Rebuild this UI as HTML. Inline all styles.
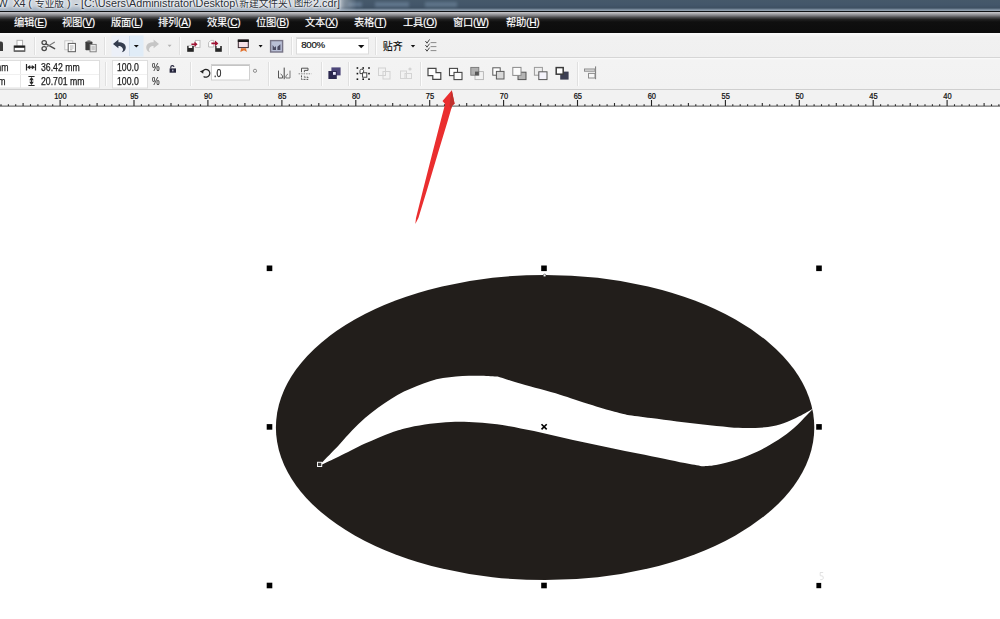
<!DOCTYPE html>
<html lang="zh-CN">
<head>
<meta charset="utf-8">
<title>CorelDRAW X4</title>
<style>
html,body{margin:0;padding:0;}
body{width:1000px;height:619px;overflow:hidden;background:#fff;position:relative;
  font-family:"Liberation Sans","Noto Sans CJK SC",sans-serif;}
.abs{position:absolute;}
#title{left:0;top:0;width:1000px;height:11px;overflow:hidden;
  background:linear-gradient(#46596a 0px,#43566a 5px,#3e5062 8px,#66788a 9px,#8d9cab 10.2px,#8d9cab 11px);}
#titleglow{left:0;top:0;width:360px;height:11px;
  background:linear-gradient(#ccd3db 0px,#c6ced7 6px,#b0bcc9 8px,#a4b1c0 11px);
  -webkit-mask-image:linear-gradient(90deg,#000 0px,#000 334px,rgba(0,0,0,.45) 345px,transparent 357px);
  mask-image:linear-gradient(90deg,#000 0px,#000 334px,rgba(0,0,0,.45) 345px,transparent 357px);}
#titletext{left:0;top:-3.3px;font-size:10.8px;line-height:13px;color:#2b3038;white-space:nowrap;
  text-shadow:0 0 2px #fff,0 0 3px #fff,0 0 5px #fff;}
#titletext span{position:absolute;top:0;white-space:nowrap}
#titletext .cj{font-size:9.7px;top:.6px}
#menu{left:0;top:11px;width:1000px;height:22px;
  background:linear-gradient(#101214 0px,#101214 1px,#c6c6cb 1px,#adadb1 2.5px,#7e7e82 4.5px,#474749 6.5px,#202020 8.5px,#0f0f0f 11px,#0c0c0c 22px);}
.mi{position:absolute;top:5.8px;font-size:10.3px;line-height:12px;color:#fff;white-space:nowrap;letter-spacing:-0.3px;text-shadow:0 0 1px rgba(255,255,255,.55)}
.mi u{text-decoration:underline;text-underline-offset:1px}
#tb1{left:0;top:33px;width:1000px;height:24px;background:linear-gradient(#fbfbfb 0px,#f6f6f6 2px,#f1f1f1 4px,#f0f0f0 24px);}
#tb2{left:0;top:57px;width:1000px;height:32px;background:linear-gradient(#d6d6d6 0px,#d6d6d6 1px,#fbfbfb 1px,#f3f3f3 3px,#f2f2f2 32px);}
#ruler{left:0;top:89px;width:1000px;height:17.5px;background:#f2f2f2;border-top:1px solid #cfcfcf;box-sizing:border-box}
.sep{position:absolute;width:1px;background:#dcdcdc}
.inp{position:absolute;background:#fff;border:1px solid #d9d9d9;box-sizing:border-box}
.t9{position:absolute;font-size:9px;line-height:10px;color:#1c1c1c;white-space:nowrap}
.nx{font-size:10px;line-height:11px;transform:scaleX(.87);transform-origin:0 0;-webkit-text-stroke:.25px #1c1c1c}
.pc{font-size:11px;line-height:12px;color:#333;transform:scaleX(.78);transform-origin:0 0;-webkit-text-stroke:.2px #333}
</style>
</head>
<body>
<div id="title" class="abs">
  <div class="abs" style="left:348px;top:2px;width:14px;height:5px;background:rgba(150,175,200,.35);filter:blur(1.5px)"></div>
  <div class="abs" style="left:375px;top:2px;width:34px;height:5px;background:rgba(150,175,200,.35);filter:blur(1.5px)"></div>
  <div class="abs" style="left:425px;top:2px;width:32px;height:5px;background:rgba(150,175,200,.33);filter:blur(1.5px)"></div>
  <div id="titleglow" class="abs"></div>
  <div id="titletext" class="abs"><span style="left:-2.6px">W</span><span style="left:13px;letter-spacing:-0.7px">X4</span><span style="left:28.3px">(</span><span class="cj" style="left:35px">专业版</span><span style="left:67px">)</span><span style="left:74.5px">-</span><span style="left:81px">[C:\Users\Administrator\Desktop\</span><span class="cj" style="left:239.3px">新建文件夹</span><span style="left:288.3px">\</span><span class="cj" style="left:294px;font-size:9.3px">图形</span><span style="left:313px">2.cdr]</span></div>
</div>
<div id="menu" class="abs">
  <span class="mi" style="left:14px">编辑(<u>E</u>)</span>
  <span class="mi" style="left:62px">视图(<u>V</u>)</span>
  <span class="mi" style="left:111px">版面(<u>L</u>)</span>
  <span class="mi" style="left:158px">排列(<u>A</u>)</span>
  <span class="mi" style="left:207px">效果(<u>C</u>)</span>
  <span class="mi" style="left:256px">位图(<u>B</u>)</span>
  <span class="mi" style="left:305px">文本(<u>X</u>)</span>
  <span class="mi" style="left:354px">表格(<u>T</u>)</span>
  <span class="mi" style="left:403px">工具(<u>O</u>)</span>
  <span class="mi" style="left:453px">窗口(<u>W</u>)</span>
  <span class="mi" style="left:506px">帮助(<u>H</u>)</span>
</div>
<div id="tb1" class="abs"></div>
<div id="tb2" class="abs"></div>
<div id="ruler" class="abs"></div>
<svg class="abs" style="left:0;top:0" width="1000" height="619" viewBox="0 0 1000 619">
  <!-- coffee bean -->
  <ellipse cx="545.1" cy="427.5" rx="269.2" ry="152.6" fill="#221e1b"/>
  <path id="swoosh" fill="#fff" d="M322.0,462.4 C324.8,459.5 334.0,450.2 339.0,444.9 C344.0,439.6 347.7,435.1 352.0,430.6 C356.3,426.1 360.7,421.9 365.0,418.1 C369.3,414.3 373.7,410.9 378.0,407.7 C382.3,404.5 386.7,401.6 391.0,398.9 C395.3,396.2 399.7,393.8 404.0,391.6 C408.3,389.4 412.7,387.6 417.0,385.9 C421.3,384.2 425.7,382.5 430.0,381.2 C434.3,379.9 438.7,378.9 443.0,378.1 C447.3,377.3 451.7,376.9 456.0,376.5 C460.3,376.1 464.7,375.8 469.0,375.7 C473.3,375.6 477.2,375.6 482.0,375.7 C486.8,375.8 495.0,376.4 497.6,376.5 C501.5,377.7 510.6,380.8 521.0,383.8 C531.4,386.8 549.2,391.4 560.0,394.7 C570.8,397.9 577.3,400.6 586.0,403.3 C594.7,406.0 605.1,409.2 612.0,411.1 C618.9,413.1 625.0,414.4 627.6,415.0 C631.5,415.5 642.8,417.0 651.0,418.1 C659.2,419.2 668.3,420.4 677.0,421.5 C685.7,422.6 694.3,423.7 703.0,424.6 C711.7,425.6 721.6,426.6 729.0,427.2 C736.4,427.8 740.7,428.0 747.2,428.0 C753.7,428.0 761.9,427.8 768.0,427.0 C774.1,426.2 778.4,425.1 783.6,423.3 C788.8,421.5 794.3,418.8 799.2,416.3 C804.1,413.8 810.9,409.7 813.2,408.4 C812.2,409.5 810.2,411.7 807.0,415.0 C803.8,418.3 798.8,423.9 794.0,428.0 C789.2,432.1 784.5,435.8 778.4,439.7 C772.3,443.6 764.5,448.1 757.6,451.4 C750.7,454.7 743.7,457.4 736.8,459.7 C729.9,461.9 721.9,463.8 716.0,464.9 C710.1,466.0 704.1,466.0 701.7,466.2 C698.9,465.7 691.1,464.4 684.8,463.1 C678.5,461.9 671.8,460.3 664.0,458.7 C656.2,457.1 646.7,455.2 638.0,453.5 C629.3,451.8 620.7,450.1 612.0,448.3 C603.3,446.5 594.7,444.7 586.0,442.8 C577.3,440.9 568.7,439.1 560.0,437.1 C551.3,435.2 542.7,433.0 534.0,431.1 C525.3,429.2 515.8,427.2 508.0,425.9 C500.2,424.6 493.7,423.9 487.2,423.3 C480.7,422.7 475.1,422.2 469.0,422.0 C462.9,421.8 457.3,421.7 450.8,422.0 C444.3,422.3 436.9,422.9 430.0,423.8 C423.1,424.7 415.7,426.0 409.2,427.5 C402.7,429.0 398.4,430.0 391.0,432.7 C383.6,435.4 373.7,439.6 365.0,443.6 C356.3,447.6 346.2,453.1 339.0,456.6 C331.8,460.1 324.8,463.3 322.0,464.6 Z"/>
  <!-- selection handles -->
  <g fill="#000">
    <rect x="266.7" y="265.5" width="5.6" height="5.6"/><rect x="541.2" y="265.5" width="5.6" height="5.6"/><rect x="816.2" y="265.5" width="5.6" height="5.6"/><rect x="266.7" y="424.1" width="5.6" height="5.6"/><rect x="816.2" y="424.1" width="5.6" height="5.6"/><rect x="266.7" y="582.7" width="5.6" height="5.6"/><rect x="541.2" y="582.7" width="5.6" height="5.6"/><rect x="816.4" y="582.9" width="4.8" height="5.3"/>
  </g>
  <circle cx="544.6" cy="275.4" r="1.3" fill="#f4f4f4" stroke="#222" stroke-width=".5"/>
  <path d="M820,572.5 h3.2 M820.2,572.5 v3.2 q3.4,-.6 3.2,2.4 q-.4,2 -3.2,1.6" fill="none" stroke="#e2e2e2" stroke-width="1"/>
  <!-- center x -->
  <path d="M541.5,424.2 L546.7,429.4 M546.7,424.2 L541.5,429.4" stroke="#000" stroke-width="1.6" fill="none"/>
  <!-- node -->
  <rect x="317.5" y="462.3" width="4.2" height="4.2" fill="#3a3837" stroke="#f2f2f2" stroke-width="1"/>
  </svg>
<svg class="abs" id="tbicons" style="left:0;top:0" width="1000" height="110" viewBox="0 0 1000 110">
  <!-- highlight for undo -->
  <rect x="111.5" y="35.5" width="18" height="21" fill="#ecf0f8"/>
  <rect x="129.5" y="35.5" width="14" height="21" fill="#e0ecf7"/>
  <path d="M129.5,36 V56" stroke="#cfdded" stroke-width="1"/>
  <!-- separators row1 -->
  <g stroke="#e0e0e0" stroke-width="1">
    <path d="M34.5,37 V55 M104.5,37 V55 M179.5,37 V55 M228.5,37 V55 M291.5,37 V55 M375.5,37 V55"/>
  </g>
  <g stroke="#fcfcfc" stroke-width="1">
    <path d="M35.5,37 V55 M105.5,37 V55 M180.5,37 V55 M229.5,37 V55 M292.5,37 V55 M376.5,37 V55"/>
  </g>
  <!-- save (partial) -->
  <path d="M-3,41.5 H1 Q3,41.5 3,43.5 V51 H-3 Z" fill="#3b3b3b"/>
  <!-- printer -->
  <rect x="17" y="40.3" width="5.6" height="6" fill="#fff" stroke="#a8a8a8" stroke-width=".9"/>
  <rect x="14.2" y="46" width="10.6" height="5.2" fill="#fff" stroke="#3a3a3a" stroke-width="1"/>
  <rect x="14.2" y="45.8" width="10.6" height="2" fill="#1e1e1e"/>
  <rect x="14.2" y="50.3" width="10.6" height="1.2" fill="#6a6a6a"/>
  <!-- scissors -->
  <g fill="none" stroke="#4a4a4a" stroke-width="1.3" stroke-linecap="round">
    <ellipse cx="44.2" cy="42.6" rx="2.2" ry="2"/>
    <ellipse cx="44.2" cy="48.6" rx="2.2" ry="2"/>
    <path d="M46,43.8 L54.6,48.6" stroke-width="1.5"/>
    <path d="M46,47.4 L54.4,42.2" stroke-width="1.1" stroke="#777"/>
  </g>
  <!-- copy -->
  <rect x="64.8" y="40.8" width="8" height="9" fill="#fafafa" stroke="#c4c4c4" stroke-width=".9"/>
  <rect x="68.2" y="43.4" width="7.2" height="8.3" fill="#fff" stroke="#5a5a5a" stroke-width="1"/>
  <path d="M70,46 H73.6 M70,48 H73.6 M70,49.8 H72.4" stroke="#9a9a9a" stroke-width=".8"/>
  <!-- paste -->
  <rect x="85.4" y="41.4" width="7" height="8.8" rx=".8" fill="#3c3c3c"/>
  <rect x="87.4" y="40.4" width="3" height="2" fill="#6e6e6e"/>
  <rect x="90" y="44.4" width="6.2" height="7.4" fill="#e9e9e9" stroke="#7a7a7a" stroke-width=".9"/>
  <path d="M91.6,47 H94.8 M91.6,49 H94.8" stroke="#9a9a9a" stroke-width=".8"/>
  <!-- undo -->
  <path d="M113,43.9 L118.4,39.6 V42.3 C122.6,42.3 125.8,44.2 125.8,47.4 C125.8,50 124,51.6 121.8,52.2 C123,51 123.4,49.6 122.6,48.2 C121.8,46.6 120.2,46 118.4,46 V48.2 Z" fill="#343c4e"/>
  <path d="M133.8,45 H138.8 L136.3,47.6 Z" fill="#111"/>
  <!-- redo (disabled) -->
  <path d="M159,43.9 L153.6,39.6 V42.3 C149.4,42.3 146.2,44.2 146.2,47.4 C146.2,50 148,51.6 150.2,52.2 C149,51 148.6,49.6 149.4,48.2 C150.2,46.6 151.8,46 153.6,46 V48.2 Z" fill="#c6c6c6"/>
  <path d="M167.6,44.8 H171.6 L169.6,47 Z" fill="#b4b4b4"/>
  <!-- import -->
  <rect x="195.4" y="40.4" width="4.6" height="7" fill="#fff" stroke="#b9b9b9" stroke-width=".9"/>
  <rect x="187.2" y="45.8" width="6.6" height="6" fill="#262626"/>
  <rect x="188.6" y="45.8" width="3.6" height="2.2" fill="#f4f4f4"/>
  <path d="M191.4,43.4 H194.4 V41.4 L197.6,44.2 L194.4,47 V45 H191.4 Z" fill="#a01434"/>
  <!-- export -->
  <path d="M208.6,47 V42.6 L210.8,40.4 H213.8 V47 Z" fill="#fff" stroke="#b4b4b4" stroke-width=".9"/>
  <rect x="215.2" y="46" width="6.6" height="5.8" fill="#262626"/>
  <rect x="216.6" y="46" width="3.6" height="2.2" fill="#f4f4f4"/>
  <path d="M211.4,42.6 H215 V40.6 L218.4,43.4 L215,46.2 V44.2 H211.4 Z" fill="#a01434"/>
  <!-- app launcher -->
  <rect x="238.3" y="40" width="10" height="7.6" fill="#f3dfe5" stroke="#3a2a32" stroke-width="1"/>
  <rect x="237.8" y="39.6" width="11" height="2.4" fill="#161616"/>
  <path d="M241,48.2 H246 L246.8,52 L244.6,50.4 L243.4,50.4 L240.4,52 Z" fill="#e2702c"/>
  <path d="M258.6,45 H262.6 L260.6,47.4 Z" fill="#111"/>
  <!-- welcome screen icon -->
  <rect x="270.6" y="40.6" width="12" height="11.4" fill="#b9bfd6" stroke="#777486" stroke-width="1.4"/>
  <path d="M272.6,50 V45 L274.6,47.4 L276,46 V50 Z M277.4,50 V46.8 L280.4,44.2 V50 Z" fill="#4a4a62"/>
  <!-- zoom combobox -->
  <rect x="296.5" y="37.5" width="72" height="16.5" fill="#fff" stroke="#dcdcdc"/>
  <path d="M297,38.5 H368" stroke="#d2d2d2" stroke-width="1"/>
  <path d="M358,45 H364.4 L361.2,48.2 Z" fill="#111"/>
  <!-- snap dropdown arrow -->
  <path d="M410.8,45 H415.2 L413,47.4 Z" fill="#111"/>
  <!-- options icon -->
  <g stroke="#777" stroke-width="1" fill="none">
    <path d="M430.6,42.6 H436.4 M430.6,46.6 H436.4 M430.6,50.6 H436.4" stroke="#8a8a8a"/>
    <path d="M425.4,41 L427,43.2 L429.6,39.4 M425.4,45 L427,47.2 L429.6,43.6 M425.4,49 L427,51.2 L429.6,47.6" stroke="#4a4a4a" stroke-width="1"/>
  </g>
  <!-- ===== row 2 ===== -->
  <!-- input boxes -->
  <rect x="-1" y="60.5" width="100.5" height="27.5" fill="#fff" stroke="#dedede"/>
  <path d="M20.5,61 V88" stroke="#e6e6e6"/>
  <path d="M0,74.5 H99" stroke="#f0f0f0"/>
  <rect x="112.5" y="60.5" width="35" height="27.5" fill="#fff" stroke="#dedede"/>
  <path d="M113,74.5 H147" stroke="#f0f0f0"/>
  <rect x="211.5" y="64.5" width="38" height="15.5" fill="#fff" stroke="#d0d0d0"/>
  <path d="M212,65.5 H249" stroke="#c4c4c4"/>
  <!-- separators row2 -->
  <g stroke="#e0e0e0" stroke-width="1">
    <path d="M105.5,62 V86 M190.5,62 V86 M268.5,62 V86 M321.5,62 V86 M348.5,62 V86 M420.5,62 V86 M577.5,62 V86"/>
  </g>
  <g stroke="#fcfcfc" stroke-width="1">
    <path d="M106.5,62 V86 M191.5,62 V86 M269.5,62 V86 M322.5,62 V86 M349.5,62 V86 M421.5,62 V86 M578.5,62 V86"/>
  </g>
  <!-- width icon -->
  <g stroke="#2a2a2a" stroke-width="1.2" fill="#2a2a2a">
    <path d="M26.5,64 V70.4 M35.5,64 V70.4" fill="none"/>
    <path d="M28,67.2 H34" fill="none"/>
    <path d="M27,67.2 L30.2,65 V69.4 Z M35,67.2 L31.8,65 V69.4 Z" stroke="none"/>
  </g>
  <!-- height icon -->
  <g stroke="#2a2a2a" stroke-width="1.2" fill="#2a2a2a">
    <path d="M28.4,76.5 H34.6 M28.4,85.5 H34.6" fill="none"/>
    <path d="M31.5,78 V84" fill="none"/>
    <path d="M31.5,77 L29.2,80.2 H33.8 Z M31.5,85 L29.2,81.8 H33.8 Z" stroke="none"/>
  </g>
  <!-- lock -->
  <rect x="169.6" y="68.4" width="6.4" height="4.3" fill="#23233a"/>
  <path d="M170.8,68.4 V67 Q170.8,65.6 172.4,65.6 Q173.8,65.6 174,66.8" fill="none" stroke="#23233a" stroke-width="1.1"/>
  <rect x="172" y="69.6" width="1.5" height="1.8" fill="#a6a6bc"/>
  <!-- rotate -->
  <path d="M202.4,71.6 A3.9,3.9 0 1 1 203.6,76.4" fill="none" stroke="#222" stroke-width="1.2"/>
  <path d="M199.8,71.2 L203.6,70 L203.2,73.8 Z" fill="#222"/>
  <!-- degree -->
  <circle cx="255" cy="70.8" r="1.6" fill="none" stroke="#777" stroke-width=".8"/>
  <!-- mirror H -->
  <g fill="none" stroke="#555" stroke-width="1">
    <path d="M284.2,67.6 V79.2" stroke="#444"/>
    <path d="M278.5,70.6 V78 H282.6 V75.8 L280.6,74"/>
    <path d="M290,70.6 V78 H285.9 V75.8 L287.9,74" stroke="#777"/>
  </g>
  <!-- mirror V -->
  <g fill="none" stroke="#555" stroke-width="1">
    <path d="M298.6,73.8 H311.4" stroke="#888" stroke-dasharray="1.5,1"/>
    <path d="M301.5,72.2 V68.2 H308 V70.4 H304.4 V72.2"/>
    <path d="M301.5,75.4 V79.4 H308 V77.2 H304.4 V75.4" stroke-dasharray="2,1"/>
  </g>
  <!-- combine (navy) -->
  <rect x="331.4" y="67.4" width="9.2" height="8" fill="#4c4679"/>
  <rect x="328.4" y="71" width="8.4" height="8" fill="#2b2850"/>
  <rect x="333" y="72" width="2.8" height="2.8" fill="#ececff"/>
  <!-- group -->
  <g fill="#111">
    <rect x="356.6" y="67.2" width="1.6" height="1.6"/><rect x="362.4" y="67.2" width="1.6" height="1.6"/><rect x="368.2" y="67.2" width="1.6" height="1.6"/>
    <rect x="356.6" y="72.8" width="1.6" height="1.6"/><rect x="368.2" y="72.8" width="1.6" height="1.6"/>
    <rect x="356.6" y="78.4" width="1.6" height="1.6"/><rect x="362.4" y="78.4" width="1.6" height="1.6"/><rect x="368.2" y="78.4" width="1.6" height="1.6"/>
  </g>
  <path d="M360,73.6 V70.6 Q360,69.2 361.8,69.2 Q363.6,69.2 363.6,70.6 V73.6 Z" fill="#fff" stroke="#333" stroke-width=".9"/>
  <rect x="362.6" y="72.8" width="4.2" height="4.4" fill="#fff" stroke="#333" stroke-width=".9"/>
  <!-- ungroup disabled -->
  <g fill="none" stroke="#d2d2d2" stroke-width="1">
    <rect x="378.5" y="68" width="7" height="7.5"/><rect x="383" y="71.5" width="7" height="7.5"/>
  </g>
  <g fill="none" stroke="#d4d4d4" stroke-width="1">
    <rect x="400.5" y="71" width="6" height="7.5"/><rect x="405" y="73.5" width="6.5" height="5"/><circle cx="410" cy="69" r="1.6" fill="#d4d4d4" stroke="none"/>
  </g>
  <!-- shaping icons -->
  <path d="M428,68.4 H436 V72.6 H440.8 V79.4 H432.8 V75.6 H428 Z" fill="#fff" stroke="#474747" stroke-width="1.2"/>
  <rect x="449.5" y="68.4" width="8" height="7.2" fill="#fff" stroke="#474747" stroke-width="1.1"/>
  <rect x="454" y="72.4" width="8" height="7.2" fill="#fafafa" stroke="#474747" stroke-width="1.1"/>
  <rect x="475" y="71.6" width="8.4" height="8" fill="#f2f2f2" stroke="#b4b4b4" stroke-width=".9"/>
  <rect x="470.8" y="67.4" width="8" height="7.8" fill="#b0b0b0" stroke="#777" stroke-width=".9"/>
  <rect x="475" y="71.6" width="3.8" height="3.6" fill="#565656"/>
  <rect x="492.8" y="67.8" width="7.4" height="7.4" fill="#fff" stroke="#5a5a5a" stroke-width="1"/>
  <rect x="496.4" y="71.4" width="7.6" height="7.6" fill="#d8d8d8" stroke="#5a5a5a" stroke-width="1"/>
  <rect x="518" y="72.2" width="8" height="7.4" fill="#b4b4b4" stroke="#555" stroke-width="1"/>
  <rect x="512.8" y="67.4" width="8.2" height="8" fill="#fbfbfb" stroke="#8a8a8a" stroke-width="1"/>
  <rect x="534.4" y="67.4" width="8" height="7.8" fill="#eeeeee" stroke="#9a9a9a" stroke-width="1"/>
  <rect x="538.8" y="71.8" width="8.2" height="7.8" fill="#f4f3fb" stroke="#555" stroke-width="1"/>
  <rect x="560.2" y="71.6" width="8.4" height="8" fill="#3b3e52"/>
  <rect x="556.2" y="67.6" width="7" height="6.6" fill="#fff" stroke="#3a3a3a" stroke-width="1.5"/>
  <!-- align icon -->
  <g fill="none" stroke="#8c8c8c" stroke-width="1">
    <path d="M595.6,66.4 V79.2" stroke="#777"/>
    <rect x="584.5" y="69" width="10.5" height="2.2" fill="#e4e4e4"/>
    <rect x="588.5" y="73.4" width="6.5" height="4.6" fill="#f6f6f6"/>
  </g>
<!--ROW2_END-->
</svg>
<div class="abs" style="left:0;top:0;width:1000px;height:110px;overflow:hidden">
  <span class="t9 nx" style="left:-5.6px;top:62.2px">mm</span>
  <span class="t9 nx" style="left:-9.4px;top:75.9px">mm</span>
  <span class="t9 nx" style="left:41px;top:62.2px">36.42 mm</span>
  <span class="t9 nx" style="left:41px;top:75.9px">20.701 mm</span>
  <span class="t9 nx" style="left:117px;top:62.2px">100.0</span>
  <span class="t9 nx" style="left:117px;top:75.9px">100.0</span>
  <span class="t9 pc" style="left:151.6px;top:61.2px">%</span>
  <span class="t9 pc" style="left:151.6px;top:75px">%</span>
  <span class="t9 nx" style="left:214px;top:67.6px">.0</span>
  <span class="t9" style="left:301.2px;top:40.4px;font-size:9.7px;letter-spacing:-0.25px;color:#111;-webkit-text-stroke:.2px #111">800%</span>
  <span class="t9" style="left:382.8px;top:40.6px;font-size:10px;line-height:12px;color:#111;font-weight:500">贴齐</span>
</div>
<svg class="abs" id="rulersvg" style="left:0;top:89px" width="1000" height="22" viewBox="0 89 1000 22">
  <path d="M0,106.1 H1000" stroke="#555" stroke-width="1"/>
  <path d="M1.0,104.3 V106.1 M8.4,104.3 V106.1 M15.7,104.3 V106.1 M30.5,104.3 V106.1 M37.9,104.3 V106.1 M45.3,104.3 V106.1 M52.7,104.3 V106.1 M67.5,104.3 V106.1 M74.9,104.3 V106.1 M82.3,104.3 V106.1 M89.7,104.3 V106.1 M104.5,104.3 V106.1 M111.8,104.3 V106.1 M119.2,104.3 V106.1 M126.6,104.3 V106.1 M141.4,104.3 V106.1 M148.8,104.3 V106.1 M156.2,104.3 V106.1 M163.6,104.3 V106.1 M178.4,104.3 V106.1 M185.8,104.3 V106.1 M193.2,104.3 V106.1 M200.5,104.3 V106.1 M215.3,104.3 V106.1 M222.7,104.3 V106.1 M230.1,104.3 V106.1 M237.5,104.3 V106.1 M252.3,104.3 V106.1 M259.7,104.3 V106.1 M267.1,104.3 V106.1 M274.5,104.3 V106.1 M289.3,104.3 V106.1 M296.6,104.3 V106.1 M304.0,104.3 V106.1 M311.4,104.3 V106.1 M326.2,104.3 V106.1 M333.6,104.3 V106.1 M341.0,104.3 V106.1 M348.4,104.3 V106.1 M363.2,104.3 V106.1 M370.6,104.3 V106.1 M378.0,104.3 V106.1 M385.3,104.3 V106.1 M400.1,104.3 V106.1 M407.5,104.3 V106.1 M414.9,104.3 V106.1 M422.3,104.3 V106.1 M437.1,104.3 V106.1 M444.5,104.3 V106.1 M451.9,104.3 V106.1 M459.3,104.3 V106.1 M474.1,104.3 V106.1 M481.4,104.3 V106.1 M488.8,104.3 V106.1 M496.2,104.3 V106.1 M511.0,104.3 V106.1 M518.4,104.3 V106.1 M525.8,104.3 V106.1 M533.2,104.3 V106.1 M548.0,104.3 V106.1 M555.4,104.3 V106.1 M562.8,104.3 V106.1 M570.1,104.3 V106.1 M584.9,104.3 V106.1 M592.3,104.3 V106.1 M599.7,104.3 V106.1 M607.1,104.3 V106.1 M621.9,104.3 V106.1 M629.3,104.3 V106.1 M636.7,104.3 V106.1 M644.1,104.3 V106.1 M658.9,104.3 V106.1 M666.2,104.3 V106.1 M673.6,104.3 V106.1 M681.0,104.3 V106.1 M695.8,104.3 V106.1 M703.2,104.3 V106.1 M710.6,104.3 V106.1 M718.0,104.3 V106.1 M732.8,104.3 V106.1 M740.2,104.3 V106.1 M747.6,104.3 V106.1 M754.9,104.3 V106.1 M769.7,104.3 V106.1 M777.1,104.3 V106.1 M784.5,104.3 V106.1 M791.9,104.3 V106.1 M806.7,104.3 V106.1 M814.1,104.3 V106.1 M821.5,104.3 V106.1 M828.9,104.3 V106.1 M843.7,104.3 V106.1 M851.0,104.3 V106.1 M858.4,104.3 V106.1 M865.8,104.3 V106.1 M880.6,104.3 V106.1 M888.0,104.3 V106.1 M895.4,104.3 V106.1 M902.8,104.3 V106.1 M917.6,104.3 V106.1 M925.0,104.3 V106.1 M932.4,104.3 V106.1 M939.7,104.3 V106.1 M954.5,104.3 V106.1 M961.9,104.3 V106.1 M969.3,104.3 V106.1 M976.7,104.3 V106.1 M991.5,104.3 V106.1 M998.9,104.3 V106.1" stroke="#2a2a2a" stroke-width="1.1"/>
  <path d="M23.1,103 V106.1 M97.1,103 V106.1 M171.0,103 V106.1 M244.9,103 V106.1 M318.8,103 V106.1 M392.7,103 V106.1 M466.7,103 V106.1 M540.6,103 V106.1 M614.5,103 V106.1 M688.4,103 V106.1 M762.3,103 V106.1 M836.3,103 V106.1 M910.2,103 V106.1 M984.1,103 V106.1" stroke="#2a2a2a" stroke-width="1.1"/>
  <path d="M60.1,100.1 V106.1 M134.0,100.1 V106.1 M207.9,100.1 V106.1 M281.9,100.1 V106.1 M355.8,100.1 V106.1 M429.7,100.1 V106.1 M503.6,100.1 V106.1 M577.5,100.1 V106.1 M651.5,100.1 V106.1 M725.4,100.1 V106.1 M799.3,100.1 V106.1 M873.2,100.1 V106.1 M947.1,100.1 V106.1" stroke="#222" stroke-width="1.1"/>
  <g font-family="Liberation Sans, sans-serif" font-size="8.3" fill="#111" stroke="#111" stroke-width=".25" text-anchor="middle">
    <text transform="translate(60.4,99.1) scale(.9,1)">100</text>
    <text transform="translate(134.3,99.1) scale(.9,1)">95</text>
    <text transform="translate(208.2,99.1) scale(.9,1)">90</text>
    <text transform="translate(282.2,99.1) scale(.9,1)">85</text>
    <text transform="translate(356.1,99.1) scale(.9,1)">80</text>
    <text transform="translate(430.0,99.1) scale(.9,1)">75</text>
    <text transform="translate(503.9,99.1) scale(.9,1)">70</text>
    <text transform="translate(577.8,99.1) scale(.9,1)">65</text>
    <text transform="translate(651.8,99.1) scale(.9,1)">60</text>
    <text transform="translate(725.7,99.1) scale(.9,1)">55</text>
    <text transform="translate(799.6,99.1) scale(.9,1)">50</text>
    <text transform="translate(873.5,99.1) scale(.9,1)">45</text>
    <text transform="translate(947.4,99.1) scale(.9,1)">40</text>
  </g>
</svg>
<svg class="abs" style="left:0;top:0" width="1000" height="619" viewBox="0 0 1000 619">
  <!-- red arrow -->
  <path d="M415.3,224 L416,218 L423,190 L431.9,155 L440.9,120 L445.1,104 L442.5,100.9 L451.8,90.2 L454.6,103.7 L452.2,105.5 L448,120 L437.4,155 L427,190 L418.4,218 Z" fill="#ea2e2f"/>
  <path d="M451.8,90.2 L454.6,103.7 L452.2,105.5 L451,109 L449.6,106 L450.4,98 Z" fill="#bf302d"/>
</svg>
<!--ARROW_END-->
</body>
</html>
